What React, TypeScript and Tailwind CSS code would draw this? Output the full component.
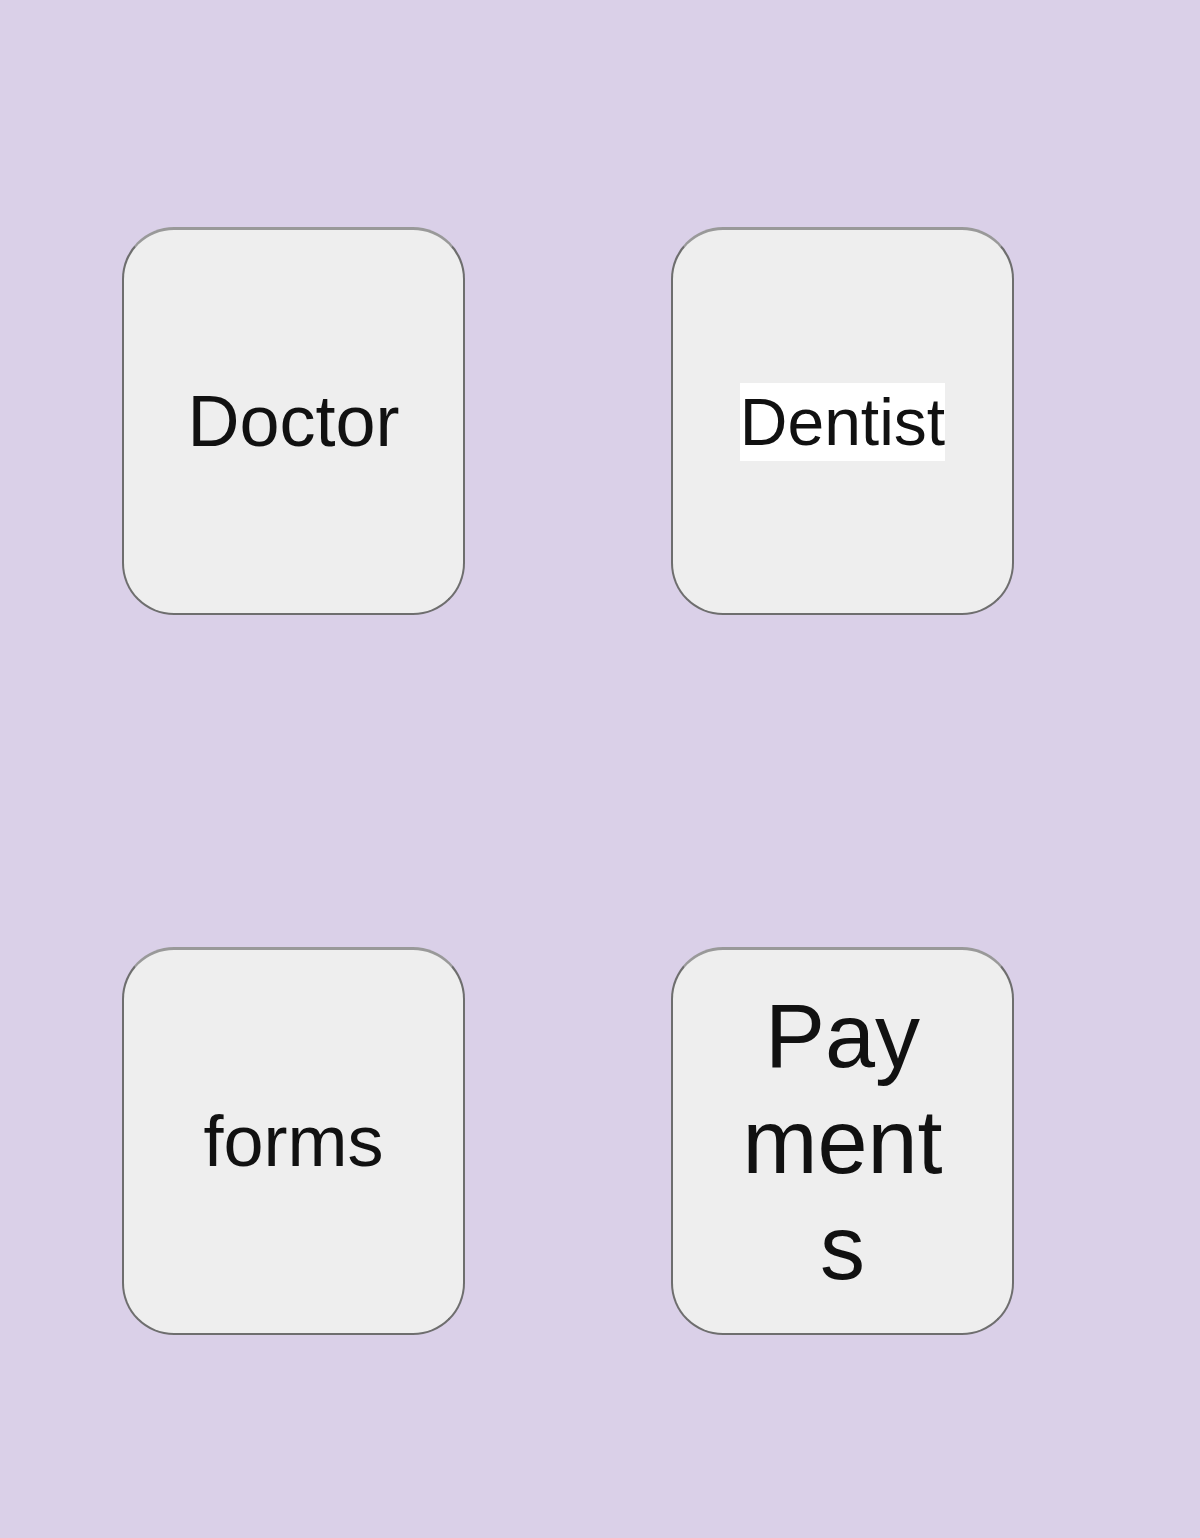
const tiles = [
  { label: "Doctor", kind: "plain" },
  { label: "Dentist", kind: "highlight" },
  { label: "forms", kind: "plain" },
  { label: "Payments", kind: "wrap" },
];

const Tile = ({ label, kind }: { label: string; kind: string }) => (
  <div className="w-[343px] h-[388px] rounded-[52px] border-2 border-[#6e6e6e] border-t-[3px] border-t-[#999999] bg-[#eeeeee] flex items-center justify-center text-[#111]">
    {kind === "plain" && <span className="text-[72px] leading-[83px]">{label}</span>}
    {kind === "highlight" && (
      <span className="text-[66px] leading-[78px] bg-white">{label}</span>
    )}
    {kind === "wrap" && (
      <span className="w-[212px] text-[90px] leading-[106px] text-center break-all">
        {label}
      </span>
    )}
  </div>
);

export default function App() {
  return (
    <div
      className="min-h-[1538px] w-full bg-[#dad0e8] pt-[227px] pl-[122px]"
      style={{ fontFamily: '"Liberation Sans", Arial, sans-serif' }}
    >
      <div className="grid grid-cols-[343px_343px] gap-x-[206px] gap-y-[332px]">
        {tiles.map((t) => (
          <Tile key={t.label} label={t.label} kind={t.kind} />
        ))}
      </div>
    </div>
  );
}
